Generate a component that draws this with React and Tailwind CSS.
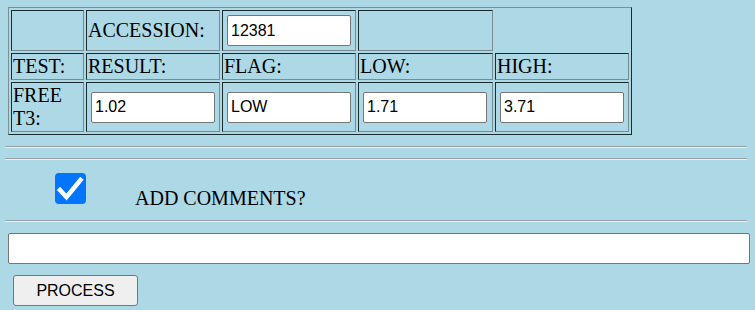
import React from "react";

const serif = { fontFamily: '"Liberation Serif", "Times New Roman", serif' };

const cellCls =
  "p-px border border-t-[#1c2b2b] border-l-[#1c2b2b] border-r-[#7b8a8e] border-b-[#7b8a8e] align-middle text-[20px] leading-[23px] text-black";

const inputCls =
  "m-[3px] block w-[124px] h-[31px] bg-white border border-[#767676] rounded-[2px] px-[3px] text-[16px] text-black font-['Liberation_Sans',Arial,sans-serif] outline-none";

const Rule = ({ className = "" }) => (
  <div className={`ml-[-3px] w-[742px] h-[2px] border-t border-t-[#9a9fa1] border-b border-b-[#e4f1f5] ${className}`} />
);

const CheckIcon = () => (
  <svg width="31" height="31" viewBox="0 0 31 31">
    <path d="M5 17 L11.5 24 L25.5 7" fill="none" stroke="white" strokeWidth="4.5" strokeLinecap="square" strokeLinejoin="miter" />
  </svg>
);

export default function App() {
  return (
    <div className="w-[755px] h-[310px] bg-[#add8e6] pl-[8px] pt-[7px] overflow-hidden" style={serif}>
      <table className="border-separate border-spacing-[2px] border border-t-[#7f8d91] border-l-[#7f8d91] border-r-[#1c2b2b] border-b-[#1c2b2b]">
        <tbody>
          <tr>
            <td className={`${cellCls} w-[73px] h-[41px]`}></td>
            <td className={`${cellCls} w-[134px]`}>ACCESSION:</td>
            <td className={cellCls}>
              <input className={inputCls} defaultValue="12381" />
            </td>
            <td className={`${cellCls} w-[135px]`}></td>
          </tr>
          <tr>
            <td className={cellCls}>TEST:</td>
            <td className={cellCls}>RESULT:</td>
            <td className={cellCls}>FLAG:</td>
            <td className={cellCls}>LOW:</td>
            <td className={cellCls}>HIGH:</td>
          </tr>
          <tr>
            <td className={`${cellCls} w-[73px]`}>FREE T3:</td>
            <td className={cellCls}>
              <input className={inputCls} defaultValue="1.02" />
            </td>
            <td className={cellCls}>
              <input className={inputCls} defaultValue="LOW" />
            </td>
            <td className={cellCls}>
              <input className={inputCls} defaultValue="1.71" />
            </td>
            <td className={cellCls}>
              <input className={inputCls} defaultValue="3.71" />
            </td>
          </tr>
        </tbody>
      </table>

      <Rule className="mt-[11px]" />
      <Rule className="mt-[10px]" />

      <div className="flex items-end h-[60px]">
        <div className="ml-[47px] mb-[16px] w-[31px] h-[31px] rounded-[4px] bg-[#0075ff] flex items-center justify-center">
          <CheckIcon />
        </div>
        <div className="ml-[49px] mb-[11px] text-[20px] leading-[22px] text-black">ADD COMMENTS?</div>
      </div>

      <Rule />

      <input className="mt-[11px] block w-[742px] h-[31px] bg-white border border-[#767676] rounded-[2px] outline-none" />

      <button className="mt-[11px] ml-[5px] w-[125px] h-[31px] bg-[#efefef] border border-[#767676] rounded-[3px] text-[16px] text-black font-['Liberation_Sans',Arial,sans-serif]">
        PROCESS
      </button>
    </div>
  );
}
